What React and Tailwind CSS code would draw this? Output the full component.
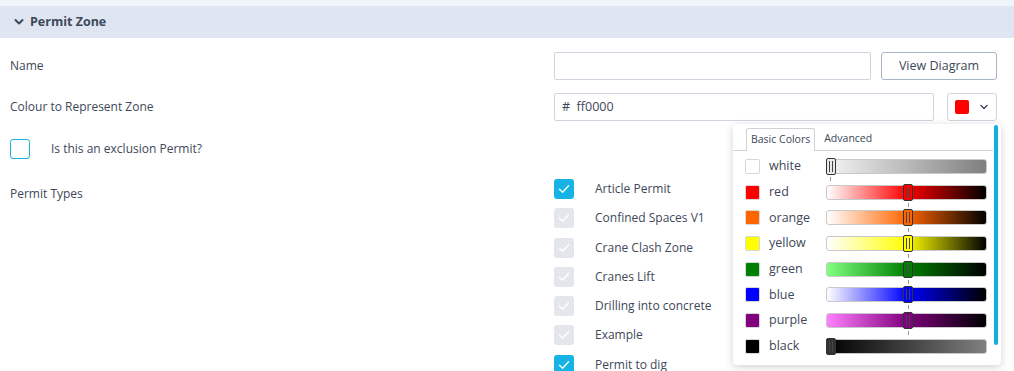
import React from "react";

const font = { fontFamily: '"Open Sans", "Liberation Sans", sans-serif' };

function Check({ on, disabled }) {
  const bg = on ? "bg-[#16b4e4]" : disabled ? "bg-[#e3e6ec]" : "bg-white";
  return (
    <div className={`w-[20px] h-[20px] rounded-[3px] ${bg} flex items-center justify-center`}>
      <svg width="12" height="10" viewBox="0 0 12 10" fill="none">
        <path d="M1.5 5.2 L4.6 8.2 L10.5 1.8" stroke="white" strokeWidth="1.3" strokeLinecap="round" strokeLinejoin="round" />
      </svg>
    </div>
  );
}

const types = [
  ["Article Permit", true],
  ["Confined Spaces V1", false],
  ["Crane Clash Zone", false],
  ["Cranes Lift", false],
  ["Drilling into concrete", false],
  ["Example", false],
  ["Permit to dig", true],
];

const colors = [
  { name: "white", sw: "#ffffff", grad: "bg-[linear-gradient(to_right,#f4f4f4,#7f7f7f)]", pos: "left", thumb: "#e9e9e9" },
  { name: "red", sw: "#ff0000", grad: "bg-[linear-gradient(to_right,#ffffff,#ff0000_50%,#000000)]", pos: "mid", thumb: "#ff0000" },
  { name: "orange", sw: "#ff6600", grad: "bg-[linear-gradient(to_right,#ffffff,#ff6600_50%,#000000)]", pos: "mid", thumb: "#ff6600" },
  { name: "yellow", sw: "#ffff00", grad: "bg-[linear-gradient(to_right,#ffffff,#ffff00_50%,#000000)]", pos: "mid", thumb: "#ffff00" },
  { name: "green", sw: "#008000", grad: "bg-[linear-gradient(to_right,#80ff80,#008000_50%,#000000)]", pos: "mid", thumb: "#008000" },
  { name: "blue", sw: "#0000ff", grad: "bg-[linear-gradient(to_right,#ffffff,#0000ff_50%,#000000)]", pos: "mid", thumb: "#0000ff" },
  { name: "purple", sw: "#800080", grad: "bg-[linear-gradient(to_right,#ff80ff,#800080_50%,#000000)]", pos: "mid", thumb: "#800080" },
  { name: "black", sw: "#000000", grad: "bg-[linear-gradient(to_right,#000000,#808080)]", pos: "left", thumb: "#333333" },
];

function Slider({ c, last }) {
  return (
    <div className="relative w-[161px] h-[15px]">
      <div className={`absolute inset-0 rounded-[3px] border border-[#c8c8c8] ${c.grad}`} />
      <div
        className={`absolute top-[-1px] w-[10px] h-[17px] rounded-[2px] border border-[#333] flex items-center justify-center gap-[2px] ${c.pos === "left" ? "left-[0px]" : "left-[77px]"}`}
        style={{ background: c.thumb }}
      >
        <div className="w-[1px] h-[11px] bg-[#444]" />
        <div className="w-[1px] h-[11px] bg-[#444]" />
      </div>
      {!last && (
        <div className={`absolute top-[18px] w-[1px] h-[4px] bg-[#999] ${c.pos === "left" ? "left-[4px]" : "left-[82px]"}`} />
      )}
    </div>
  );
}

export default function App() {
  return (
    <div className="w-[1014px] h-[371px] bg-white overflow-hidden text-[#3d4859] relative" style={font}>
      <div className="h-[6px] bg-[#f0f4fb]" />
      <div className="h-[32px] bg-[#dfe6f1] flex items-center pl-[14px] gap-[6px]">
        <svg width="10" height="8" viewBox="0 0 10 8">
          <path d="M1.5 2 L5 5.5 L8.5 2" stroke="#3d4859" strokeWidth="2" fill="none" strokeLinecap="round" strokeLinejoin="round" />
        </svg>
        <span className="text-[12.5px] font-bold">Permit Zone</span>
      </div>

      <div className="flex mt-[14px] h-[28px] items-center">
        <div className="w-[554px] pl-[10px] text-[12px] font-medium">Name</div>
        <div className="w-[317px] h-[28px] border border-[#cfd5de] rounded-[2px]" />
        <div className="ml-[10px] w-[116px] h-[28px] border border-[#a9b6c8] rounded-[3px] flex items-center justify-center text-[12.5px]">
          View Diagram
        </div>
      </div>

      <div className="flex mt-[13px] h-[28px] items-center">
        <div className="w-[554px] pl-[10px] text-[12px] font-medium">Colour to Represent Zone</div>
        <div className="w-[380px] h-[28px] border border-[#cfd5de] rounded-[2px] flex items-center pl-[7px] text-[12.5px]">
          #&nbsp;&nbsp;ff0000
        </div>
        <div className="ml-[13px] w-[50px] h-[28px] border border-[#cfd5de] rounded-[3px] flex items-center pl-[7px] gap-[10px]">
          <div className="w-[14px] h-[14px] rounded-[2px] bg-[#ff0000]" />
          <svg width="10" height="8" viewBox="0 0 10 8">
            <path d="M2 2.5 L5 5.5 L8 2.5" stroke="#3d4859" strokeWidth="1.4" fill="none" strokeLinecap="round" strokeLinejoin="round" />
          </svg>
        </div>
      </div>

      <div className="flex mt-[18px] items-center pl-[10px]">
        <div className="w-[20px] h-[20px] rounded-[3px] border border-[#1ab0da]" />
        <span className="ml-[21px] text-[12px] font-medium">Is this an exclusion Permit?</span>
      </div>

      <div className="flex mt-[20px]">
        <div className="w-[554px] pl-[10px] text-[12px] font-medium pt-[6px]">Permit Types</div>
        <div className="flex flex-col gap-[9.3px]">
          {types.map(([t, on]) => (
            <div key={t} className="flex items-center h-[20px]">
              <Check on={on} disabled={!on} />
              <span className="ml-[21px] text-[12px]">{t}</span>
            </div>
          ))}
        </div>
      </div>

      <div className="absolute left-[733px] top-[124px] w-[268px] h-[241px] bg-white rounded-[4px] shadow-[0_2px_8px_rgba(0,0,0,0.18)]">
        <div className="absolute right-[3px] top-[1px] w-[4px] h-[220px] rounded-[2px] bg-[#0fb0e0]" />
        <div className="flex items-end h-[27px] pl-[13px] border-b border-[#cfd3d8] mr-[8px]">
          <div className="h-[23px] px-[4px] border border-b-0 border-[#cfd3d8] rounded-t-[3px] bg-white mb-[-1px] flex items-center text-[10.5px]">
            Basic Colors
          </div>
          <div className="h-[23px] ml-[9px] flex items-center text-[10.5px]">Advanced</div>
        </div>
        <div className="flex flex-col pt-[8px] pl-[12px] gap-[10.7px]">
          {colors.map((c, i) => (
            <div key={c.name} className="flex items-center h-[15px]">
              <div className="w-[15px] h-[15px] rounded-[2px] border border-[#d7d7d7]" style={{ background: c.sw }} />
              <span className="ml-[9px] w-[57px] text-[12.5px]">{c.name}</span>
              <Slider c={c} last={i === colors.length - 1} />
            </div>
          ))}
        </div>
      </div>
    </div>
  );
}
